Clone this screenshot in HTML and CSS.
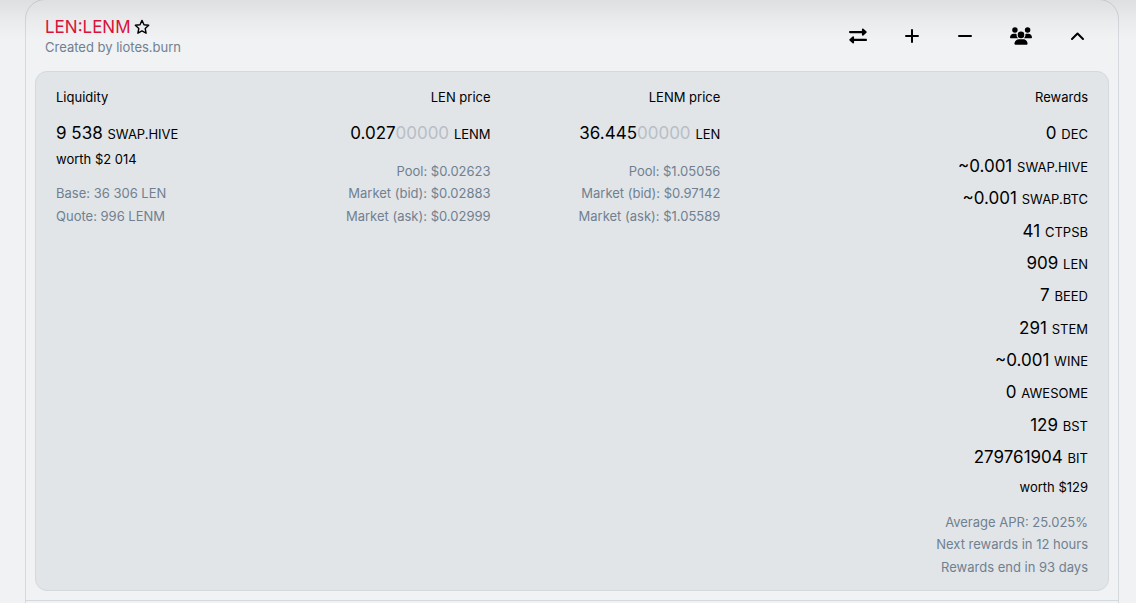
FILE: index.html
```html
<!DOCTYPE html>
<html lang="en">
<head>
<meta charset="utf-8">
<title>LEN:LENM pool</title>
<link rel="stylesheet" href="styles.css">
</head>
<body>
<div class="top-shade"></div>
<main class="pools">
  <article class="pool">
    <header class="pool-header">
      <div>
        <h1 class="pair">LEN:LENM
          <button class="icon-button" aria-label="Add to favourites"><svg width="16" height="16" viewBox="0 0 16 16"><path d="M8 1.400l2 4.300 4.700.6-3.500 3.200.9 4.700L8 11.900l-4.100 2.300.9-4.700-3.500-3.200 4.700-.6z" fill="none" stroke="currentColor" stroke-width="1.400" stroke-linejoin="round"/></svg></button>
        </h1>
        <p class="creator">Created by liotes.burn</p>
      </div>
      <nav class="actions">
        <button class="icon-button" aria-label="Swap"><svg width="18" height="18" viewBox="0 0 512 512"><path fill="currentColor" d="M32 176h336v48c0 21 26 32 41 17l88-80c10-9 10-25 0-34l-88-80c-15-15-41-4-41 17v48H32c-18 0-32 14-32 32s14 32 32 32zM480 336H144v-48c0-21-26-32-41-17l-88 80c-10 9-10 25 0 34l88 80c15 15 41 4 41-17v-48h336c18 0 32-14 32-32s-14-32-32-32z"/></svg></button>
        <button class="icon-button" aria-label="Add liquidity"><svg width="15" height="16" viewBox="0 0 15 16"><path d="M7 2v12M1 8h12" stroke="currentColor" stroke-width="2" stroke-linecap="round"/></svg></button>
        <button class="icon-button" aria-label="Remove liquidity"><svg width="14" height="16" viewBox="0 0 14 16"><path d="M1 8h12" stroke="currentColor" stroke-width="2" stroke-linecap="round"/></svg></button>
        <button class="icon-button" aria-label="Liquidity providers"><svg width="22" height="18" viewBox="0 0 640 512"><path fill="currentColor" d="M144 0a80 80 0 1 1 0 160 80 80 0 1 1 0-160zM512 0a80 80 0 1 1 0 160 80 80 0 1 1 0-160zM0 299c0-59 48-107 107-107h43c16 0 31 4 44 10-1 7-2 14-2 22 0 38 17 72 43 96H21c-11 0-21-10-21-21zM405 320c27-24 43-58 43-96 0-8-1-15-2-22 14-6 28-10 44-10h43c59 0 107 48 107 107 0 11-10 21-21 21zM224 224a96 96 0 1 1 192 0 96 96 0 1 1-192 0zM128 485c0-73 60-133 133-133h118c73 0 133 60 133 133 0 15-12 27-27 27H155c-15 0-27-12-27-27z"/></svg></button>
        <button class="icon-button" aria-label="Collapse"><svg width="15" height="16" viewBox="0 0 15 16"><path d="M2 11l5.500-5.500L13 11" fill="none" stroke="currentColor" stroke-width="2" stroke-linecap="round" stroke-linejoin="round"/></svg></button>
      </nav>
    </header>
    <div class="details">
      <section>
        <h2 class="label">Liquidity</h2>
        <p class="amount">9 538 <small>SWAP.HIVE</small></p>
        <p class="worth">worth $2 014</p>
        <div class="notes"><p>Base: 36 306 LEN</p><p>Quote: 996 LENM</p></div>
      </section>
      <section class="end">
        <h2 class="label">LEN price</h2>
        <p class="amount">0.027<span class="zeros">00000</span> <small>LENM</small></p>
        <div class="notes"><p>Pool: $0.02623</p><p>Market (bid): $0.02883</p><p>Market (ask): $0.02999</p></div>
      </section>
      <section class="end">
        <h2 class="label">LENM price</h2>
        <p class="amount">36.445<span class="zeros">00000</span> <small>LEN</small></p>
        <div class="notes"><p>Pool: $1.05056</p><p>Market (bid): $0.97142</p><p>Market (ask): $1.05589</p></div>
      </section>
      <section class="end">
        <h2 class="label">Rewards</h2>
        <ul class="rewards">
          <li class="amount">0 <small>DEC</small></li>
          <li class="amount">~0.001 <small>SWAP.HIVE</small></li>
          <li class="amount">~0.001 <small>SWAP.BTC</small></li>
          <li class="amount">41 <small>CTPSB</small></li>
          <li class="amount">909 <small>LEN</small></li>
          <li class="amount">7 <small>BEED</small></li>
          <li class="amount">291 <small>STEM</small></li>
          <li class="amount">~0.001 <small>WINE</small></li>
          <li class="amount">0 <small>AWESOME</small></li>
          <li class="amount">129 <small>BST</small></li>
          <li class="amount">279761904 <small>BIT</small></li>
        </ul>
        <p class="worth">worth $129</p>
        <div class="notes"><p>Average APR: 25.025%</p><p>Next rewards in 12 hours</p><p>Rewards end in 93 days</p></div>
      </section>
    </div>
  </article>
</main>
</body>
</html>
```
FILE: styles.css
```css
* {
  box-sizing: border-box;
}

body {
  margin: 0;
  background: #f0f2f4;
  color: #000;
  font: 13px/1.73 Inter, "Liberation Sans", sans-serif;
  overflow: hidden;
}

h1, h2, p {
  margin: 0;
  font-weight: 400;
}

.top-shade {
  position: absolute;
  inset: 0 0 auto;
  height: 40px;
  background: linear-gradient(rgba(0, 0, 0, 0.08), rgba(0, 0, 0, 0.03) 50%, transparent);
  pointer-events: none;
}

.pools {
  margin: -1px 17px 0 25px;
  min-height: 101vh;
  border: 1px solid #d5d8dc;
  border-radius: 20px 20px 0 0;
}

.pool {
  padding: 0 9px 9px;
  border-bottom: 1px solid #d5d8dc;
}

.pool-header {
  display: flex;
  justify-content: space-between;
  align-items: center;
  padding: 17px 24px 14px 10px;
}

.pair {
  display: flex;
  align-items: center;
  gap: 3px;
  color: #dc143c;
  font-size: 17px;
  line-height: 20px;
}

.creator {
  color: #708090;
  line-height: 20px;
}

.actions {
  display: flex;
  align-items: center;
  gap: 38px;
  margin-bottom: 3px;
}

.icon-button {
  display: flex;
  align-items: center;
  padding: 0;
  border: 0;
  background: none;
  color: #000;
  cursor: pointer;
}

.details {
  display: grid;
  grid-template-columns: 205fr 230fr 230fr 368fr;
  padding: 14px 20px 12px;
  border: 1px solid #d5d8dc;
  border-radius: 12px;
  background: #e1e5e8;
}

.end {
  text-align: right;
}

.label {
  margin-bottom: 12px;
  font-size: 13px;
}

.amount {
  font-size: 17px;
  line-height: 1.61;
}

.amount small {
  font-size: 13px;
}

.rewards {
  margin: 0;
  padding: 0;
  list-style: none;
}

.rewards .amount {
  margin-bottom: 5px;
}

.zeros {
  color: #b8bec6;
}

.notes {
  margin-top: 12px;
  color: #708090;
}
```
